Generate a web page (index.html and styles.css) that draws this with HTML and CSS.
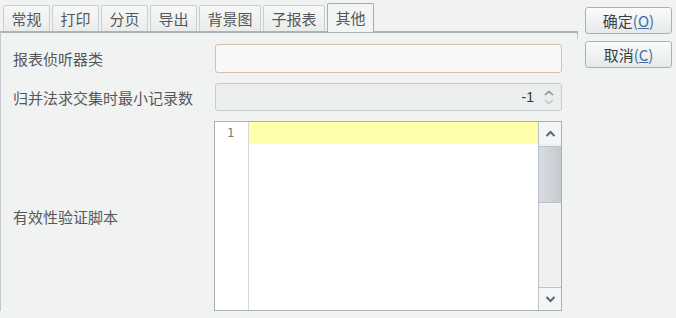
FILE: index.html
```html
<!DOCTYPE html>
<html lang="zh">
<head>
    <meta charset="UTF-8">
    <meta name="viewport" content="width=device-width, initial-scale=1.0">
    <link rel="stylesheet" href="styles.css">
    <title>其他</title>
</head>
<body>
    <div class="dialog">
        <div class="panel">
            <div class="tabs">
                <div class="tab">常规</div>
                <div class="tab">打印</div>
                <div class="tab">分页</div>
                <div class="tab">导出</div>
                <div class="tab">背景图</div>
                <div class="tab">子报表</div>
                <div class="tab active">其他</div>
            </div>
            <div class="content">
                <label class="label" for="listener">报表侦听器类</label>
                <input class="field focused" id="listener" type="text">

                <label class="label">归并法求交集时最小记录数</label>
                <div class="field spinner">
                    <span class="value">-1</span>
                    <span class="arrows">
                        <svg width="10" height="6" viewBox="0 0 10 6"><path d="M1 5 L5 1.5 L9 5" fill="none" stroke="#8a8f94" stroke-width="1.6"/></svg>
                        <svg width="10" height="6" viewBox="0 0 10 6"><path d="M1 1 L5 4.5 L9 1" fill="none" stroke="#c3c7ca" stroke-width="1.6"/></svg>
                    </span>
                </div>

                <label class="label">有效性验证脚本</label>
                <div class="editor">
                    <div class="gutter"><span>1</span></div>
                    <div class="code">
                        <div class="current-line"></div>
                    </div>
                    <div class="scrollbar">
                        <div class="sb-btn">
                            <svg width="11" height="7" viewBox="0 0 11 7"><path d="M1.5 6 L5.5 2 L9.5 6" fill="none" stroke="#5f6468" stroke-width="2"/></svg>
                        </div>
                        <div class="sb-track">
                            <div class="sb-thumb"></div>
                        </div>
                        <div class="sb-btn">
                            <svg width="11" height="7" viewBox="0 0 11 7"><path d="M1.5 1 L5.5 5 L9.5 1" fill="none" stroke="#5f6468" stroke-width="2"/></svg>
                        </div>
                    </div>
                </div>
            </div>
        </div>
        <div class="buttons">
            <button type="button">确定<span class="key">(<u>O</u>)</span></button>
            <button type="button">取消<span class="key">(<u>C</u>)</span></button>
        </div>
    </div>
</body>
</html>
```

FILE: styles.css
```css
body {
  margin: 0;
  background-color: #f1f2f2;
  font-family: "Noto Sans CJK SC", "Noto Sans", sans-serif;
  font-size: 15px;
  color: #55585b;
}

.dialog {
  display: flex;
  gap: 7px;
  height: 318px;
  overflow: hidden;
}

.panel {
  width: 578px;
}

.tabs {
  display: flex;
  align-items: flex-end;
  gap: 2px;
  height: 31px;
  padding-left: 3px;
}

.tab {
  height: 26px;
  line-height: 25px;
  padding: 0 7.5px;
  border: 1px solid #c9ced2;
  border-bottom: none;
  border-radius: 2px 2px 0 0;
  background: linear-gradient(#f7f8f8, #eaecec);
  color: #55585b;
  box-sizing: border-box;
}

.tab.active {
  height: 29px;
  line-height: 28px;
  margin-bottom: -1px;
  border-color: #a4adb4;
  background: #f3f4f4;
  position: relative;
  z-index: 1;
}

.content {
  display: grid;
  grid-template-columns: 202px 348px;
  grid-template-rows: 29px 28px 190px;
  row-gap: 10px;
  align-items: center;
  padding: 11px 0 0 12px;
  border-top: 2px solid #aab3ba;
  border-left: 1px solid #c3c9ce;
  position: relative;
}

.content::after {
  content: "";
  position: absolute;
  right: 0;
  top: 0;
  width: 1px;
  height: 10px;
  background: linear-gradient(#aab3ba, rgba(170, 179, 186, 0));
}

.label {
  color: #55585b;
}

.field {
  height: 100%;
  box-sizing: border-box;
  border: 1px solid #c5cbd0;
  border-radius: 3px;
  margin: 0;
  font: inherit;
}

.field.focused {
  width: 347px;
  background: #f7f8f8;
  border-color: #dcbcab;
  outline: none;
}

.spinner {
  display: flex;
  align-items: center;
  justify-content: flex-end;
  width: 347px;
  background: #eceeee;
  padding-right: 7px;
  gap: 10px;
}

.value {
  color: #333;
  font-family: "Liberation Sans", sans-serif;
  font-size: 14px;
}

.arrows {
  display: flex;
  flex-direction: column;
  gap: 3px;
}

.arrows svg {
  display: block;
}

.editor {
  display: flex;
  height: 190px;
  width: 348px;
  margin-left: -1px;
  box-sizing: border-box;
  border: 1px solid #a8b0b6;
  background: #fff;
}

.gutter {
  width: 34px;
  border-right: 1px solid #d5d9dc;
  font-family: "DejaVu Sans Mono", monospace;
  font-size: 12px;
  color: #777;
  padding-left: 12px;
  line-height: 22px;
  box-sizing: border-box;
}

.code {
  flex: 1;
}

.current-line {
  height: 22px;
  background: #ffffaa;
}

.scrollbar {
  width: 22px;
  display: flex;
  flex-direction: column;
  border-left: 1px solid #bcc3c8;
  background: #eef0f1;
}

.sb-btn {
  height: 22px;
  display: flex;
  align-items: center;
  justify-content: center;
  background: #f4f5f6;
}

.sb-btn:last-child {
  border-top: 1px solid #bcc3c8;
}

.sb-track {
  flex: 1;
  padding-top: 2px;
}

.sb-thumb {
  height: 55px;
  background: linear-gradient(90deg, #d8dce0, #cfd4d8 50%, #c3c9ce);
  border-top: 1px solid #bcc3c8;
  border-bottom: 1px solid #bcc3c8;
}

.buttons {
  display: flex;
  flex-direction: column;
  gap: 7px;
  padding-top: 7px;
}

.buttons button {
  width: 87px;
  height: 27px;
  border: 1px solid #a9b1b8;
  border-radius: 3px;
  background: linear-gradient(#fafbfb, #e6e9eb);
  font: inherit;
  color: #3c3f42;
  padding: 0;
}

.key {
  color: #3c6fa8;
}
```
